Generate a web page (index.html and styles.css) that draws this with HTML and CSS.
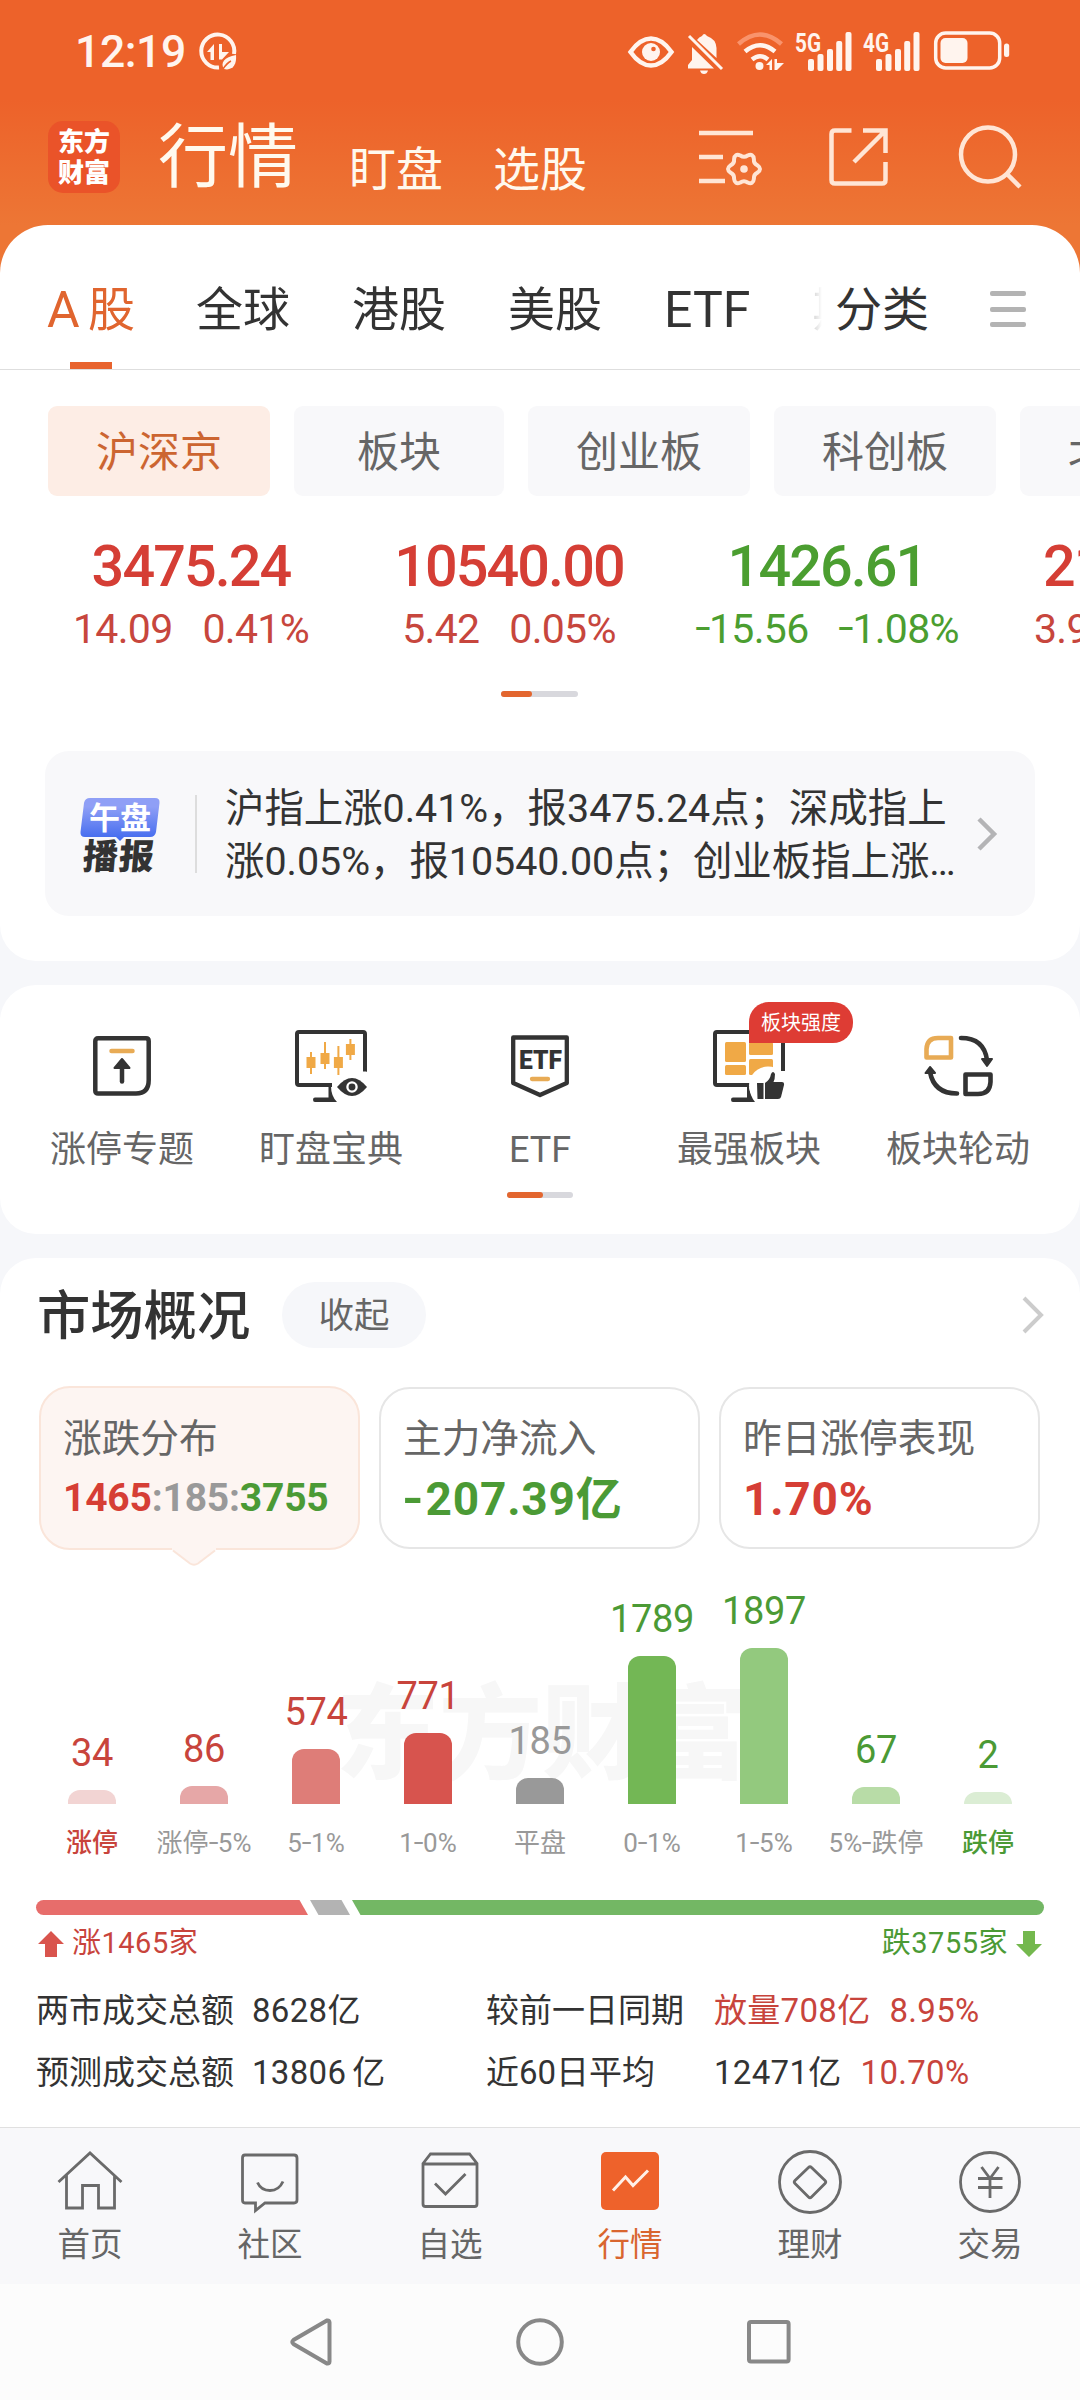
FILE: index.html
```html
<!DOCTYPE html>
<html lang="zh-CN">
<head>
<meta charset="utf-8">
<title>行情</title>
<link rel="stylesheet" href="styles.css">
</head>
<body>
<div class="app">
  <header class="header">
    <div class="status">
      <span class="clock">12:19</span>
      <svg class="st-data" width="40" height="40" viewBox="0 0 40 40" fill="none" stroke="#fff4ee"><path d="M21 35.5A16.5 16.5 0 1 1 36 22" stroke-width="4"/><path d="M9 20L16 12V28H12.5V20Z M21 12H24V20H31L24 27.500H21Z" fill="#fff4ee" stroke="none"/><path d="M26 37C22 31 26 25 38 23C39 33 34 39 26 37Z" fill="#fff4ee" stroke="none"/><path d="M25 37Q29 31 33 29" stroke="#ed622a" stroke-width="1.500"/></svg>
      <svg class="st-eye" width="46" height="32" viewBox="0 0 46 32"><path d="M2.500 16Q12 2.500 23 2.500T43.500 16Q34 29.500 23 29.500T2.500 16Z" fill="none" stroke="#fff4ee" stroke-width="4.500"/><circle cx="23" cy="16" r="9" fill="#fff4ee"/><circle cx="25.500" cy="13" r="2.300" fill="#ed622a"/></svg>
      <svg class="st-bell" width="36" height="42" viewBox="0 0 36 42"><g fill="#fff4ee"><path d="M10 8Q12 5 15 4Q17 0 20 4Q29 7 29.500 16V26Z"/><path d="M5 15L27 36.500H1V33L5 28Z"/><path d="M13 38.500H21Q20 42 17 42T13 38.500Z"/></g><path d="M2 4L35 37" stroke="#fff4ee" stroke-width="3"/></svg>
      <svg class="st-wifi" width="48" height="40" viewBox="0 0 48 40" fill="none" stroke="#fff4ee" stroke-width="4.500"><path d="M1.500 12Q23-7 44.500 12" stroke="#f9936c"/><path d="M8 19.500Q23 7 38 19.500"/><path d="M15 27.500Q23 21 31 27.500"/><g fill="#fff4ee" stroke="none"><circle cx="22.500" cy="34" r="4"/><path d="M29 33L35 27V38H32.500V33ZM37.500 38V27H40V31H47L40 38Z"/></g></svg>
      <svg class="st-sig" width="58" height="40" viewBox="0 0 58 40" fill="#fff4ee"><text class="net" x="0" y="19.500" textLength="26" lengthAdjust="spacingAndGlyphs">5G</text><rect x="13" y="27" width="6" height="12" rx="2"/><rect x="22.500" y="22" width="6" height="17" rx="2"/><rect x="32" y="17" width="6" height="22" rx="2"/><rect x="41.200" y="9" width="6" height="30" rx="2"/><rect x="50.500" y="0" width="6" height="39" rx="2"/></svg>
      <svg class="st-sig2" width="58" height="40" viewBox="0 0 58 40" fill="#fff4ee"><text class="net" x="0" y="19.500" textLength="26" lengthAdjust="spacingAndGlyphs">4G</text><rect x="13" y="27" width="6" height="12" rx="2"/><rect x="22.500" y="22" width="6" height="17" rx="2"/><rect x="32" y="17" width="6" height="22" rx="2"/><rect x="41.200" y="9" width="6" height="30" rx="2"/><rect x="50.500" y="0" width="6" height="39" rx="2"/></svg>
      <svg class="st-bat" width="76" height="40" viewBox="0 0 76 40" fill="#fff4ee"><rect x="1.700" y="2" width="64" height="35" rx="10" fill="none" stroke="#fff4ee" stroke-width="3.500"/><rect x="6.500" y="7" width="27" height="25" rx="5"/><rect x="70" y="12.500" width="5.200" height="13.500" rx="2.500"/></svg>
    </div>
    <div class="topnav">
      <div class="logo"><span>东方</span><span>财富</span></div>
      <span class="top-main">行情</span>
      <span class="top-sub">盯盘</span>
      <span class="top-sub second">选股</span>
      <svg class="ic-list" width="64" height="58" viewBox="0 0 64 58" fill="none" stroke="#ffe5d5" stroke-width="4.500"><path d="M0 3H54M0 27H24M0 51H26"/><g transform="translate(45 39)"><path d="M13.500-3.600Q18.500 0 13.500 3.600Q9.500 5.500 9.900 9.900Q9.250 16 3.600 13.500Q0 11-3.600 13.500Q-9.250 16-9.900 9.900Q-9.500 5.500-13.500 3.600Q-18.500 0-13.500-3.600Q-9.500-5.500-9.900-9.900Q-9.250-16-3.600-13.500Q0-11 3.600-13.500Q9.250-16 9.900-9.900Q9.500-5.500 13.500-3.600Z" stroke-width="4"/><circle r="3.800" fill="#ffe5d5" stroke="none"/></g></svg>
      <svg class="ic-share" width="59" height="58" viewBox="0 0 59 58" fill="none" stroke="#ffe5d5" stroke-width="4.500"><path d="M22.500 2.500H6Q2.500 2.500 2.500 6V52Q2.500 55.500 6 55.500H53Q56.500 55.500 56.500 52V34M34 2.500H56.500V25M56 3L25 34"/></svg>
      <svg class="ic-search" width="64" height="64" viewBox="0 0 64 64" fill="none" stroke="#ffe5d5" stroke-width="4.500"><circle cx="29" cy="29.500" r="27"/><path d="M47 48L61 62"/></svg>
    </div>
  </header>

  <main class="content">
    <section class="sheet">
      <div class="tabs">
        <div class="tab-scroll">
          <span class="tab active"><i class="lat">A</i>股</span><span class="tab">全球</span><span class="tab">港股</span><span class="tab">美股</span><span class="tab"><i class="lat">ETF</i></span><span class="tab">期货</span>
        </div>
        <span class="tab cat">分类</span>
        <span class="menu"><i></i><i></i><i></i></span>
      </div>
      <div class="pills">
        <span class="pill on">沪深京</span><span class="pill narrow">板块</span><span class="pill">创业板</span><span class="pill">科创板</span><span class="pill">北证</span>
      </div>
      <div class="quotes">
        <div class="quote up"><b>3475.24</b><p><span>14.09</span><span>0.41%</span></p></div>
        <div class="quote up"><b>10540.00</b><p><span>5.42</span><span>0.05%</span></p></div>
        <div class="quote down"><b>1426.61</b><p><span><i class="hy">-</i>15.56</span><span><i class="hy">-</i>1.08%</span></p></div>
        <div class="quote up last"><b>21</b><p><span>3.91</span></p></div>
      </div>
      <div class="dots"><i></i></div>
      <div class="news">
        <div class="news-tag">
          <svg width="80" height="44" viewBox="0 0 80 44"><defs><linearGradient id="tag" x2="0" y2="1"><stop offset=".2" stop-color="#8f9ff6"/><stop offset="1" stop-color="#3f68ee"/></linearGradient></defs><path d="M10 0H75Q80 0 79.500 5L76 34Q75 39 70 39H44L40 43L36 39H5Q0 39 .500 34L4 5Q5 0 10 0Z" fill="url(#tag)"/><text class="tag-top" x="9" y="31">午盘</text></svg>
          <span class="tag-bottom">播报</span>
        </div>
        <p class="news-text">沪指上涨0.41%，报3475.24点；深成指上<br>涨0.05%，报10540.00点；创业板指上涨…</p>
        <svg class="chev" width="20" height="34" viewBox="0 0 20 34" fill="none" stroke="#b4b4b6" stroke-width="4.500"><path d="M2 2L17 17L2 32"/></svg>
      </div>
    </section>

    <section class="tools">
      <div class="tool-row">
        <div class="tool"><div class="tool-ic"><svg width="58" height="60" viewBox="0 0 58 60" fill="none" stroke="#333" stroke-width="4.500"><path d="M5 2.300H53Q55.700 2.300 55.700 5V44Q55.700 57.500 43 57.500H5Q2.300 57.500 2.300 55V5Q2.300 2.300 5 2.300Z"/><path d="M18.500 15H39.500" stroke="#e8ab55" stroke-linecap="round"/><path d="M29 27V45.500" stroke-linecap="round"/><path d="M29 23L36.500 32H21.500Z" fill="#333" stroke-width="2" stroke-linejoin="round"/></svg></div><span>涨停专题</span></div>
        <div class="tool"><div class="tool-ic"><svg width="72" height="72" viewBox="0 0 72 72" fill="none" stroke="#333" stroke-width="4"><path d="M70 41.500L70 4Q70 2 68 2H4Q2 2 2 4V53Q2 55 4 55H37"/><path d="M68 37L72 42V36Z" fill="#333" stroke="none"/><path d="M33.500 56H36Q36 66 42 72H20Q18 72 18 69.800T20 67.500H33.500Z" fill="#333" stroke="none"/><g stroke="#f0a946" stroke-width="2"><path d="M16 22V44M30 12V39M43.400 16V45M55.400 9V30"/><path d="M16 27V38M30 23V34M43.400 27V38M55.400 14V25" stroke-width="9"/></g><path d="M42 57Q57 39 72 57Q57 75 42 57Z" fill="#333" stroke="none"/><circle cx="57" cy="57" r="4.600" stroke="#fff" stroke-width="2.300"/></svg></div><span>盯盘宝典</span></div>
        <div class="tool"><div class="tool-ic"><svg width="58" height="62" viewBox="0 0 58 62" fill="none" stroke="#333" stroke-width="4.300" stroke-linejoin="round"><path d="M2.200 2.500H55.800V48L29 60L2.200 48Z"/><text class="etf" x="8" y="33.500" textLength="43" lengthAdjust="spacingAndGlyphs">ETF</text><path d="M21 44H37" stroke="#e8ab55" stroke-linecap="round"/></svg></div><span>ETF</span></div>
        <div class="tool"><div class="tool-ic"><svg width="72" height="72" viewBox="0 0 72 72" fill="none" stroke="#333" stroke-width="4"><path d="M70 41V4Q70 2 68 2H4Q2 2 2 4V53Q2 55 4 55H37"/><path d="M34 56H36Q37 66 42 72H20Q18 72 18 69.800T20 67.500H34Z" fill="#333" stroke="none"/><g fill="#f0a946" stroke="none"><rect x="12" y="12" width="21" height="20" rx="1.500"/><rect x="36" y="12" width="24" height="13" rx="1.500"/><rect x="12" y="35" width="21" height="10" rx="1.500"/><rect x="36" y="29" width="24" height="16" rx="1.500"/></g><circle cx="55" cy="55.500" r="19" fill="#fff" stroke="none"/><path d="M44 53H50.500V69H44.500ZM52 53Q57 50 58 44Q60 40 62 44Q62 49 60.500 52H69Q71.500 52 71 55L68 67Q67.500 69 65 69H52Z" fill="#333" stroke="none"/></svg><em class="badge">板块强度</em></div><span>最强板块</span></div>
        <div class="tool"><div class="tool-ic"><svg width="69" height="62" viewBox="0 0 69 62" fill="none" stroke="#333" stroke-width="4.600" stroke-linejoin="round"><path d="M27 3V22.500H2.500V14Q3 3 14 3Z" stroke="#e8ab55"/><path d="M41.500 39.500H66.500V47Q66 59 54 59H41.500Z"/><path d="M37 3Q60 3 63 25M33 58.500Q10 58.500 6 37" stroke-linecap="round"/><path d="M58 24H68L63 31ZM1.500 38H11L6 32Z" fill="#333" stroke-width="2"/></svg></div><span>板块轮动</span></div>
      </div>
      <div class="dots tool-dots"><i></i></div>
    </section>

    <section class="market">
      <div class="market-head"><h2>市场概况</h2><span class="fold">收起</span><svg class="chev-r" width="22" height="38" viewBox="0 0 22 38" fill="none" stroke="#ccc" stroke-width="4"><path d="M2 2L19 19L2 36"/></svg></div>
      <div class="cards">
        <div class="card sel"><span>涨跌分布</span><b class="ratio"><i class="red">1465</i><i class="gray">:185:</i><i class="green">3755</i></b>
          <svg class="tip" width="44" height="18" viewBox="0 0 44 18"><path d="M0 0V2L18 15.500Q22 18 26 15.500L44 2V0Z" fill="#fdf5f2"/><path d="M1 2.500L18 15.500Q22 18 26 15.500L43 2.500" fill="none" stroke="#fae5da" stroke-width="2"/></svg></div>
        <div class="card"><span>主力净流入</span><b class="green"><i class="hyb">-</i>207.39亿</b></div>
        <div class="card"><span>昨日涨停表现</span><b class="red">1.70%</b></div>
      </div>
      <div class="chart">
        <div class="watermark">东方财富</div>
        <div class="col c1"><b>34</b><i style="height:14px"></i><span>涨停</span></div>
        <div class="col c2"><b>86</b><i style="height:18px"></i><span>涨停<u class="hy">-</u>5%</span></div>
        <div class="col c3"><b>574</b><i style="height:55px"></i><span>5<u class="hy">-</u>1%</span></div>
        <div class="col c4"><b>771</b><i style="height:71px"></i><span>1<u class="hy">-</u>0%</span></div>
        <div class="col c5"><b>185</b><i style="height:26px"></i><span>平盘</span></div>
        <div class="col c6"><b>1789</b><i style="height:148px"></i><span>0<u class="hy">-</u>1%</span></div>
        <div class="col c7"><b>1897</b><i style="height:156px"></i><span>1<u class="hy">-</u>5%</span></div>
        <div class="col c8"><b>67</b><i style="height:17px"></i><span>5%<u class="hy">-</u>跌停</span></div>
        <div class="col c9"><b>2</b><i style="height:12px"></i><span>跌停</span></div>
      </div>
      <svg class="split" width="1008" height="15" viewBox="0 0 1008 15"><path d="M7.500 0H263.500L272 15H7.500A7.500 7.500 0 0 1 7.500 0Z" fill="#e76d6b"/><path d="M274 0H305.500L314 15H282.500Z" fill="#b3b3b3"/><path d="M316 0H1000.500A7.500 7.500 0 0 1 1000.500 15H324.500Z" fill="#73b764"/></svg>
      <div class="counts">
        <span class="red"><svg width="26" height="26" viewBox="0 0 26 26"><path d="M13 0L26 13H19V26H7V13H0Z" fill="#d9544d"/></svg>涨1465家</span>
        <span class="green">跌3755家<svg width="26" height="26" viewBox="0 0 26 26"><path d="M13 26L0 13H7V0H19V13H26Z" fill="#74b84e"/></svg></span>
      </div>
      <div class="stats">
        <span>两市成交总额</span><span class="num">8628亿</span><span>较前一日同期</span><span class="num red">放量708亿<em class="n1">8.95%</em></span>
        <span>预测成交总额</span><span class="num">13806<i class="thin"></i>亿</span><span>近60日平均</span><span class="num">12471亿<em class="red">10.70%</em></span>
      </div>
    </section>
  </main>

  <nav class="tabbar">
    <a><svg width="66" height="66" viewBox="0 0 66 66"><path d="M1.500 33L33 4L64.500 33M9.500 26V59H25.500V36.500H41.500V59H57.500V26"/></svg>首页</a>
    <a><svg width="66" height="66" viewBox="0 0 66 66"><path d="M8 6H57Q60 6 60 9V51Q60 54 57 54H28L18.500 61.500V54H8Q5.500 54 5.500 51V9Q5.500 6 8 6ZM20.500 33.500Q24 41.500 33 41.500T46 32.500"/></svg>社区</a>
    <a><svg width="66" height="66" viewBox="0 0 66 66"><path d="M6 14.500L13.500 5H52.500L60 14.500V55Q60 57.500 57.500 57.500H8.500Q6 57.500 6 55ZM6 15H60M18 34.500L28.500 45L48.500 25"/></svg>自选</a>
    <a class="cur"><svg width="66" height="66" viewBox="0 0 66 66"><rect x="4" y="3" width="58" height="58" rx="5" fill="#ee622b" stroke="none"/><path d="M16 41.500L28.500 28L36 36.500L51 21.500" stroke="#fff0e8" stroke-width="3"/></svg>行情</a>
    <a><svg width="66" height="66" viewBox="0 0 66 66"><circle cx="33" cy="33" r="30.500"/><path d="M31.500 18.500Q33 17 34.500 18.500L48 31.500Q49.500 33 48 34.500L34.500 48Q33 49.500 31.500 48L18 34.500Q16.500 33 18 31.500Z"/></svg>理财</a>
    <a><svg width="66" height="66" viewBox="0 0 66 66"><circle cx="33" cy="33" r="29.500"/><path d="M24.500 18L33 29.500L41.500 18M21 29.500H45.500M21 38.500H45.500M33 29.500V49"/></svg>交易</a>
  </nav>
  <div class="sysnav">
    <svg width="46" height="50" viewBox="0 0 46 50"><path d="M5.500 23Q3 25 5.500 27L39 46.500Q41.500 47 41.500 44.500V5.500Q41.500 3 39 3.500Z"/></svg>
    <svg width="50" height="50" viewBox="0 0 50 50"><circle cx="25" cy="25" r="21.800"/></svg>
    <svg width="46" height="50" viewBox="0 0 46 50"><rect x="3" y="5" width="39.600" height="39.600" rx="2"/></svg>
  </div>
</div>
</body>
</html>
```
FILE: styles.css
```css
* { box-sizing: border-box; }
body { margin: 0; font-family: Roboto, "Noto Sans CJK SC", sans-serif; color: #333; background: #f6f7fa; }
p, h2 { margin: 0; }
i, em { font-style: normal; }
u { text-decoration: none; }
svg { display: block; flex: none; overflow: visible; }
.app { width: 1080px; height: 2400px; overflow: hidden; display: flex; flex-direction: column; }
.red { color: #c8443c; }
.green { color: #4b9a35; }
.gray { color: #999; }
.hy { display: inline-block; transform: translateY(-.04em) scaleX(1.35); margin: 0 .04em; }
.hyb { display: inline-block; transform: scaleX(1.2); margin: 0 .06em 0 .02em; }

.header { height: 273px; margin-bottom: -48px; background: linear-gradient(#ed622a 100px, #ed7635 225px); flex: none; }
.status { height: 105px; display: flex; padding-top: 32px; color: #fff4ee; }
.clock { width: 122px; margin-left: 75px; font-size: 44.500px; font-weight: 500; line-height: 40px; letter-spacing: -.4px; white-space: nowrap; }
.st-data { margin-left: 1px; }
.st-eye { margin: 4px 0 0 390px; }
.st-bell { margin-left: 13px; }
.st-wifi { margin-left: 14px; }
.st-sig { margin-left: 10px; }
.st-sig2 { margin-left: 10px; }
.st-bat { margin-left: 13px; margin-top: -1px; }
.net { font: 700 26px Roboto, sans-serif; }
.topnav { display: flex; align-items: flex-start; height: 120px; padding-left: 48px; color: #fff9ee; }
.logo { width: 72px; height: 72px; margin-top: 16px; padding: 6px 0; border-radius: 15px; background: #ea5329; color: #fff; display: flex; flex-direction: column; align-items: center; font-weight: 900; font-size: 26px; line-height: 31px; }
.top-main { margin: 11px 0 0 38px; font-size: 70px; line-height: 84px; }
.top-sub { margin: 33px 0 0 51px; font-size: 47px; line-height: 64px; }
.top-sub.second { margin-left: 50px; }
.ic-list { margin: 25px 0 0 112px; }
.ic-share { margin: 23px 0 0 66px; }
.ic-search { margin: 20px 0 0 71px; }

.content { flex: 1; min-height: 0; overflow: hidden; display: flex; flex-direction: column; gap: 24px; }
.sheet { height: 736px; flex: none; background: #fff; border-radius: 48px 48px 36px 36px; overflow: hidden; }
.tabs { height: 145px; border-bottom: 1px solid #dedede; display: flex; }
.tab-scroll { width: 822px; padding-left: 47px; display: flex; gap: 62px; overflow: hidden; white-space: nowrap; -webkit-mask-image: linear-gradient(to right, #000 780px, transparent 822px); mask-image: linear-gradient(to right, #000 780px, transparent 822px); }
.tab { flex: none; display: flex; align-items: center; font-size: 47px; height: 144px; padding-bottom: 19px; line-height: 60px; padding-top: 45px; }
.tab .lat { font-size: 50px; }
.tab.active { color: #e0652f; width: 88px; margin-right: -1px; justify-content: space-between; background: linear-gradient(#e8632e, #e8632e) 23px 137px / 42px 7px no-repeat; }
.tab.cat { margin-left: 13px; }
.menu { display: flex; flex-direction: column; justify-content: space-between; width: 36px; height: 36px; margin: 66px 0 0 61px; }
.menu i { height: 5px; border-radius: 2px; background: #b3b3b3; }
.pills { display: flex; gap: 24px; padding: 36px 0 0 48px; overflow: hidden; }
.pill { flex: none; width: 222px; height: 90px; border-radius: 9px; background: #f8f8fa; color: #666; font-size: 42px; line-height: 94px; text-align: center; white-space: nowrap; }
.pill.narrow { width: 210px; }
.pill:last-child { width: 180px; }
.pill.on { background: #fdede5; color: #cc6531; }
.quotes { display: flex; width: 1400px; margin: 40px 0 0 32px; }
.quote { width: 318px; text-align: center; flex: none; }
.quote b { display: block; font-weight: 500; font-size: 57.500px; line-height: 62px; letter-spacing: -1.900px; }
.quote p { display: flex; justify-content: center; gap: 30px; font-size: 41px; line-height: 62px; letter-spacing: -.7px; }
.quote.up { color: #d53e35; }
.quote.down { color: #4b9e30; }
.quote.up p { color: #c7463d; }
.quote.last { text-align: left; padding-left: 57px; }
.quote.last p { justify-content: flex-start; margin-left: -9px; }
.dots { width: 77px; height: 6px; margin: 31px 0 0 501px; border-radius: 3px; background: #d8d8dd; }
.dots i { display: block; width: 31px; height: 6px; border-radius: 3px; background: #e3662f; }
.news { width: 990px; height: 165px; margin: 54px 0 0 45px; border-radius: 24px; background: #f8f8fa; display: flex; align-items: center; }
.news-tag { width: 152px; height: 78px; padding-left: 35px; border-right: 2px solid #ddd; position: relative; padding-top: 3px; }
.tag-top { font: 700 31px "Noto Sans CJK SC", sans-serif; fill: #fff; }
.tag-bottom { display: block; margin: -2px 0 0 3px; font-size: 35px; line-height: 35px; font-weight: 900; transform: skewX(-5deg); letter-spacing: 1px; }
.news-text { margin-left: 28px; padding-top: 4px; width: 735px; font-size: 39.400px; line-height: 52.500px; white-space: nowrap; }
.chev { margin-left: 17px; }

.tools { height: 249px; flex: none; background: #fff; border-radius: 36px; padding-top: 45px; }
.tool-row { display: flex; padding-left: 17.500px; }
.tool { width: 209px; display: flex; flex-direction: column; align-items: center; font-size: 36px; line-height: 48px; color: #666; }
.tool-ic { height: 72px; display: flex; align-items: center; position: relative; margin-bottom: 24px; }
.badge { position: absolute; left: 36px; top: -28px; width: 104px; height: 41px; border-radius: 20px 20px 20px 0; background: #de3c34; color: #fff; font-size: 20px; line-height: 43px; text-align: center; white-space: nowrap; }
.etf { font: 900 26px Roboto, sans-serif; fill: #333; stroke: none; }
.tool-dots { width: 66px; margin: 18px 0 0 507px; }
.tool-dots i { width: 36px; }

.market { flex: none; height: 869px; background: #fff; border-radius: 36px 36px 0 0; padding-top: 24px; }
.market-head { display: flex; align-items: center; height: 66px; padding-left: 37px; }
.market-head h2 { width: 245px; padding-top: 4px; font-size: 53.300px; line-height: 66px; font-weight: 500; }
.fold { width: 144px; height: 66px; border-radius: 33px; background: #f6f7fa; color: #666; font-size: 35.500px; line-height: 69px; text-align: center; }
.chev-r { margin-left: 596px; }
.cards { display: flex; gap: 19px; padding: 38px 0 0 39px; }
.card { position: relative; width: 321px; height: 162px; margin-top: 1px; border: 2px solid #e6e6e6; border-radius: 31px; padding: 23px 0 0 22px; display: flex; flex-direction: column; }
.card span { font-size: 38.700px; line-height: 54px; color: #666; }
.card b { font-size: 46px; line-height: 66px; font-weight: 700; letter-spacing: .8px; }
.card b.ratio { font-size: 39px; letter-spacing: -.2px; line-height: 64px; }
.card b.red, .ratio .red { color: #d63e35; }
.card.sel { height: 164px; margin-top: 0; padding-top: 24px; background: #fdf5f2; border-color: #fae5da; }
.tip { position: absolute; left: 131px; top: 160px; }
.chart { position: relative; display: flex; height: 322px; margin-top: 0; padding-left: 36px; align-items: flex-end; }
.watermark { position: absolute; left: 336px; top: 116px; font-size: 103px; line-height: 140px; font-weight: 900; color: #f7f7f7; }
.col { position: relative; width: 112px; display: flex; flex-direction: column; align-items: center; white-space: nowrap; color: #c8443c; }
.col b { font-weight: 400; font-size: 38px; line-height: 44px; margin-bottom: 15px; letter-spacing: -.3px; }
.col i { width: 48px; border-radius: 12px 12px 0 0; }
.col span { font-size: 26px; line-height: 36px; margin: 21px 0 11px; color: #999; }
.c1 i { background: #f2d4d3; } .c2 i { background: #e6a7a7; } .c3 i { background: #de7d78; } .c4 i { background: #d7544e; }
.c5 i { background: #999; } .c6 i { background: #73b755; } .c7 i { background: #93c97e; } .c8 i { background: #b8dca7; } .c9 i { background: #dbedd4; }
.c5 { color: #999; }
.c6, .c7, .c8, .c9 { color: #4b9a35; }
.col.c1 span { color: #c8443c; font-weight: 500; }
.col.c9 span { color: #4b9a35; font-weight: 500; }
.split { margin: 28px 0 0 36px; }
.counts { display: flex; justify-content: space-between; padding: 9px 38px 0 38px; font-size: 29px; line-height: 38px; letter-spacing: .5px; }
.counts span { display: flex; align-items: center; gap: 8px; }
.counts svg { position: relative; top: 1px; }
.stats { display: grid; grid-template-columns: 216px 234px 228px auto; row-gap: 2px; padding: 19px 0 0 36px; font-size: 33px; line-height: 60px; white-space: nowrap; }
.num { letter-spacing: .3px; }
.stats em { margin-left: 19px; }
.stats .thin { display: inline-block; width: 6px; }

.tabbar { height: 157px; flex: none; background: #f8f8fa; border-top: 1px solid #e0e0e0; display: flex; }
.tabbar a { width: 180px; padding-top: 21px; display: flex; flex-direction: column; align-items: center; font-size: 32.500px; line-height: 44px; color: #666; }
.tabbar svg { fill: none; stroke: #6a6a6a; stroke-width: 2.800px; margin-bottom: 8px; }
.tabbar a.cur { color: #d9652f; }
.sysnav { height: 116px; flex: none; background: #fcfcfc; display: flex; align-items: center; justify-content: center; gap: 181px; }
.sysnav svg { fill: none; stroke: #888; stroke-width: 4px; }
```
